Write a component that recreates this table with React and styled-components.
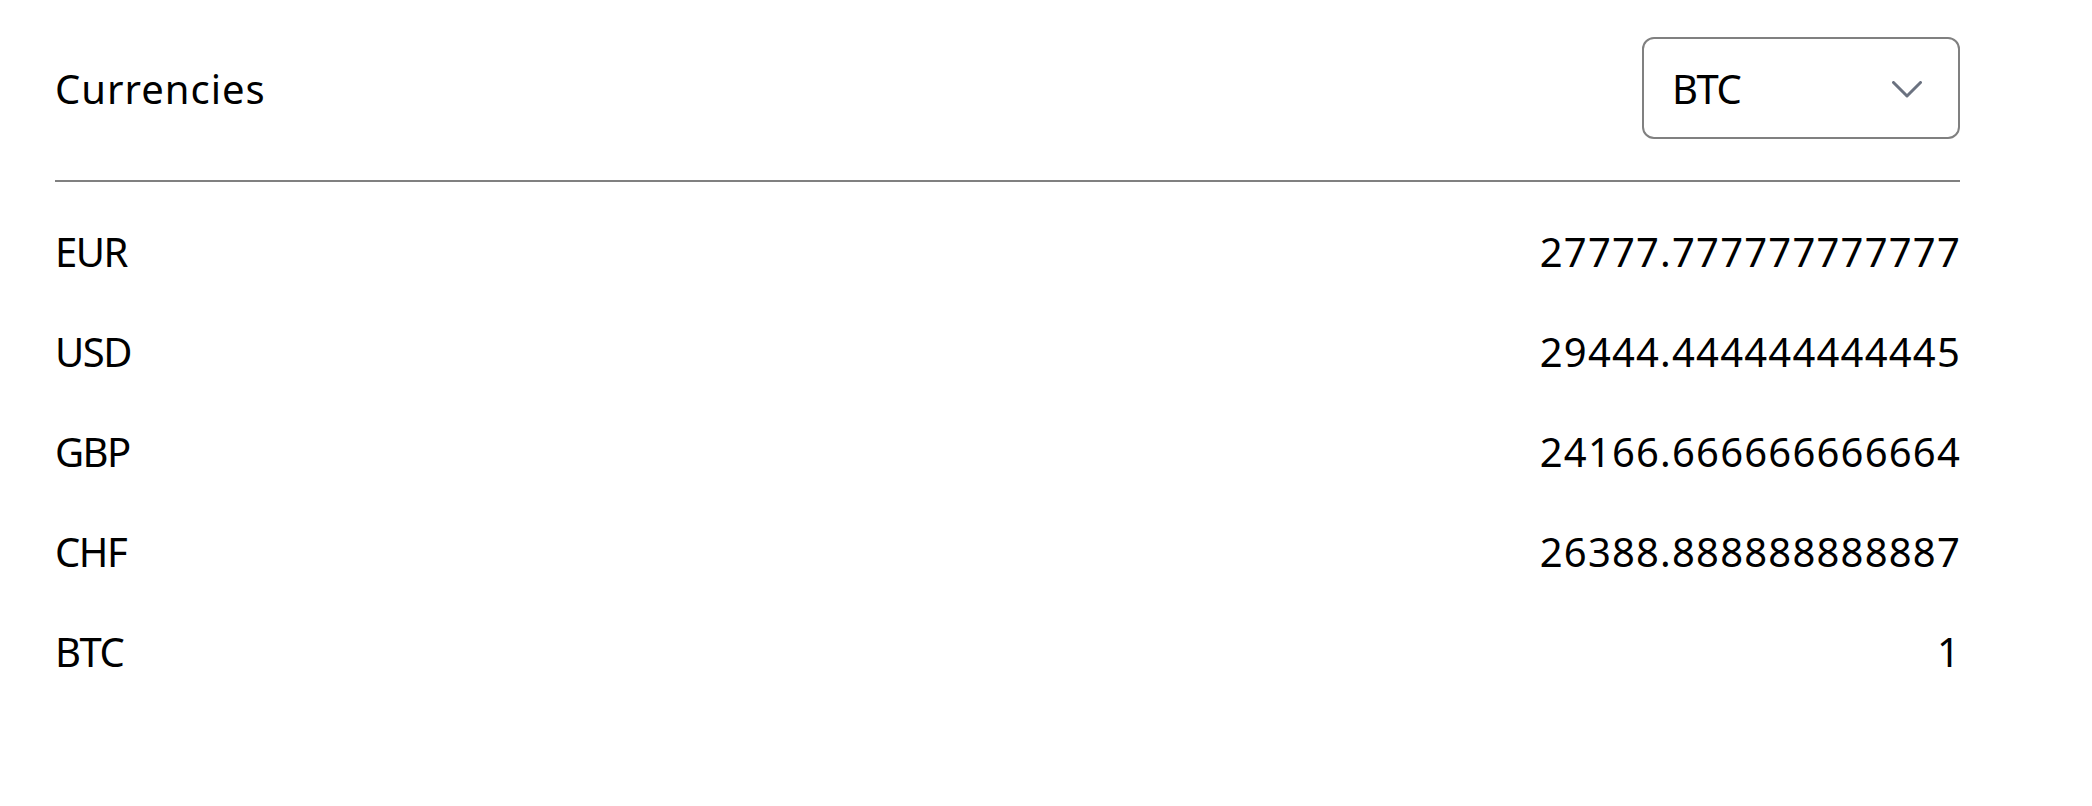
import React, { useState } from 'react'
import styled, { createGlobalStyle } from 'styled-components'

const GlobalStyle = createGlobalStyle`
  body {
    margin: 0;
    background: #fff;
    font-family: "Noto Sans", "Open Sans", sans-serif;
    color: #000;
  }
`

const rates = [
  { code: 'EUR', value: '27777.777777777777' },
  { code: 'USD', value: '29444.444444444445' },
  { code: 'GBP', value: '24166.666666666664' },
  { code: 'CHF', value: '26388.888888888887' },
  { code: 'BTC', value: '1' }
]

const ChevronDown = () => (
  <svg width="30" height="17" viewBox="0 0 30 17" fill="none">
    <polyline
      points="1.5,1.5 15,15 28.5,1.5"
      stroke="#6b7280"
      strokeWidth="3"
      strokeLinecap="round"
      strokeLinejoin="round"
    />
  </svg>
)

const App = () => {
  const [base] = useState('BTC')
  return (
    <>
      <GlobalStyle />
      <Wrapper>
        <Header>
          <Title>Currencies</Title>
          <Select>
            <Code>{base}</Code>
            <ChevronDown />
          </Select>
        </Header>
        <List>
          {rates.map(({ code, value }) => (
            <Row key={code}>
              <Code>{code}</Code>
              <Amount>{value}</Amount>
            </Row>
          ))}
        </List>
      </Wrapper>
    </>
  )
}

const Wrapper = styled.main`
  width: 1905px;
  margin-left: 55px;
  font-size: 40px;
`

const Header = styled.header`
  display: flex;
  align-items: center;
  justify-content: space-between;
  padding: 37px 0 41px;
  border-bottom: 2px solid #808080;
`

const Title = styled.h1`
  margin: 0;
  font-size: 40px;
  font-weight: 400;
  letter-spacing: 1px;
`

const Select = styled.div`
  box-sizing: border-box;
  width: 318px;
  height: 102px;
  display: flex;
  align-items: center;
  justify-content: space-between;
  padding: 0 36px 0 28px;
  border: 2px solid #808080;
  border-radius: 12px;
  svg {
    margin-top: 2px;
  }
`

const List = styled.ul`
  list-style: none;
  margin: 0;
  padding: 19px 0 0;
`

const Row = styled.li`
  height: 100px;
  display: flex;
  align-items: center;
  justify-content: space-between;
`

const Code = styled.span`
  letter-spacing: -1.5px;
`

const Amount = styled.span`
  letter-spacing: 1.2px;
  margin-right: -1px;
`

export default App
